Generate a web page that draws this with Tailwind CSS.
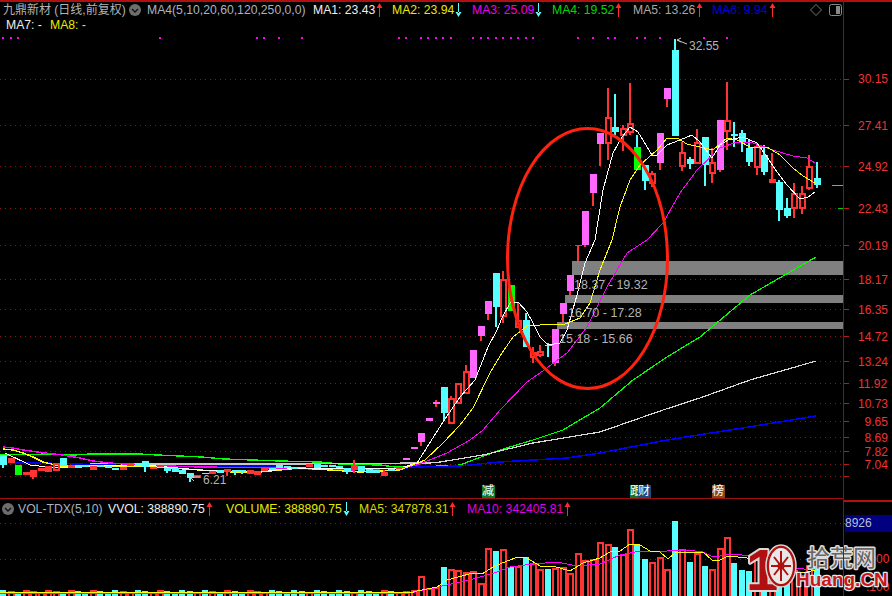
<!DOCTYPE html>
<html lang="zh">
<head>
<meta charset="utf-8">
<title>九鼎新材</title>
<script src="https://cdn.jsdelivr.net/npm/@tailwindcss/browser@4"></script>
</head>
<body class="bg-black overflow-hidden">
<div class="relative w-[892px] h-[596px] overflow-hidden bg-black text-[12.2px] leading-none font-['Liberation_Sans','Noto_Sans_CJK_SC',sans-serif]">

  <!-- the chart itself: candles and lines are filled in by the script below -->
  <svg id="chart" class="absolute inset-0" width="892" height="596" viewBox="0 0 892 596">
    <g id="grid"></g>
    <rect x="572" y="261" width="271" height="14" fill="#808080"/>
    <rect x="565" y="295" width="278" height="8" fill="#808080"/>
    <rect x="557" y="322" width="286" height="7" fill="#808080"/>
    <g id="lines" fill="none" shape-rendering="crispEdges"></g>
    <g id="candles" shape-rendering="crispEdges"></g>
    <g id="lines2" fill="none" shape-rendering="crispEdges"></g>
    <g id="vols" shape-rendering="crispEdges"></g>
    <g id="vlines" fill="none" shape-rendering="crispEdges"></g>

    <g fill="#b4b4b4" font-size="12.5">
      <text x="574" y="288.5">18.37 - 19.32</text>
      <text x="568" y="316.5">16.70 - 17.28</text>
      <text x="559" y="342.5">15.18 - 15.66</text>
    </g>
    <g fill="#b4b4b4" font-size="12">
      <text x="689" y="49.5">32.55</text>
      <text x="203" y="483.5">6.21</text>
    </g>
    <path d="M687 44 L677 40 M677 40 L681 38 M677 40 L681 42" stroke="#c8c8c8" fill="none"/>
    <path d="M200 477 L190 477 M190 477 L194 475 M190 477 L194 481" stroke="#c8c8c8" fill="none"/>

    <ellipse cx="587.5" cy="258.5" rx="80" ry="130" fill="none" stroke="#ff2210" stroke-width="3"/>

    <!-- right axis -->
    <g fill="#ee3333" font-size="12">
      <text x="858" y="83">30.15</text>
      <text x="858" y="129.5">27.41</text>
      <text x="858" y="170.5">24.92</text>
      <text x="858" y="212.5">22.43</text>
      <text x="858" y="249.5">20.19</text>
      <text x="858" y="283.5">18.17</text>
      <text x="858" y="313.5">16.35</text>
      <text x="858" y="340.5">14.72</text>
      <text x="858" y="365.5">13.24</text>
      <text x="858" y="387.5">11.92</text>
      <text x="858" y="407.5">10.73</text>
      <text x="864.5" y="425.5">9.65</text>
      <text x="864.5" y="441.5">8.69</text>
      <text x="864.5" y="455.5">7.82</text>
      <text x="864.5" y="468.5">7.04</text>
      <text x="866" y="563">.000</text>
      <text x="866" y="591">.100</text>
    </g>
    <rect x="832" y="185" width="11" height="1" fill="#a8a800"/>
    <rect x="838" y="208" width="5" height="1" fill="#00d000"/>

    <!-- watermark -->
    <g font-weight="700" paint-order="stroke" stroke-linejoin="round">
      <text x="746" y="590" font-size="58" fill="#b01010" stroke="#d8d8d8" stroke-width="4">1</text>
      <ellipse cx="781" cy="566" rx="12" ry="18" fill="#e8e8e8" stroke="#b01010" stroke-width="6"/>
      <ellipse cx="781" cy="566" rx="15" ry="21" fill="none" stroke="#d8d8d8" stroke-width="1.5"/>
      <path d="M781 551 V581 M771 566 H791 M774 557 L788 575 M788 557 L774 575" stroke="#b01010" stroke-width="2"/>
      <circle cx="781" cy="566" r="3.5" fill="#b01010"/>
      <text x="807" y="566" font-size="23" fill="#666666" stroke="#dddddd" stroke-width="3" font-weight="400">拾荒网</text>
      <text x="796" y="586" font-size="19" fill="#c81818" stroke="#e8e8e8" stroke-width="2.5">Huang.CN</text>
    </g>
  </svg>

  <!-- page frame: top rule, legend rows, marker row, volume legend -->
  <div class="relative flex flex-col h-full">
    <div class="h-[2px] bg-[#b01010]"></div>

    <div class="flex items-center h-[16px] pl-[3px] whitespace-nowrap">
      <span class="w-[126px] text-[12px] text-[#b4b4b4]">九鼎新材 (日线,前复权)</span>
      <span class="flex items-center justify-center w-[12px] h-[12px] mr-[6px] rounded-full bg-[#6e6e6e]">
        <svg width="8" height="5" viewBox="0 0 8 5"><path d="M1 1 L4 4 L7 1" fill="none" stroke="#111" stroke-width="1.4"/></svg>
      </span>
      <span class="w-[166px] text-[#a8b4c0]">MA4(5,10,20,60,120,250,0,0)</span>
      <span class="flex items-center w-[79px] text-[#eeeeee]">MA1: 23.43<svg class="ml-[1px]" width="7" height="14" viewBox="0 0 7 14"><path d="M3.5 0 L6.5 5 H0.5 Z M3 4 H4 V14 H3 Z" fill="#ff2a2a"/></svg></span>
      <span class="flex items-center w-[80px] text-[#e8e800]">MA2: 23.94<svg class="ml-[1px]" width="7" height="14" viewBox="0 0 7 14"><path d="M3.5 14 L6.5 9 H0.5 Z M3 0 H4 V10 H3 Z" fill="#55ffff"/></svg></span>
      <span class="flex items-center w-[80px] text-[#ee00ee]">MA3: 25.09<svg class="ml-[1px]" width="7" height="14" viewBox="0 0 7 14"><path d="M3.5 14 L6.5 9 H0.5 Z M3 0 H4 V10 H3 Z" fill="#55ffff"/></svg></span>
      <span class="flex items-center w-[81px] text-[#00d800]">MA4: 19.52<svg class="ml-[1px]" width="7" height="14" viewBox="0 0 7 14"><path d="M3.5 0 L6.5 5 H0.5 Z M3 4 H4 V14 H3 Z" fill="#ff2a2a"/></svg></span>
      <span class="flex items-center w-[79px] text-[#a8a8a8]">MA5: 13.26<svg class="ml-[1px]" width="7" height="14" viewBox="0 0 7 14"><path d="M3.5 0 L6.5 5 H0.5 Z M3 4 H4 V14 H3 Z" fill="#ff2a2a"/></svg></span>
      <span class="flex items-center w-[98px] text-[#0000e0]">MA6: 9.94<svg class="ml-[1px]" width="7" height="14" viewBox="0 0 7 14"><path d="M3.5 0 L6.5 5 H0.5 Z M3 4 H4 V14 H3 Z" fill="#ff2a2a"/></svg></span>
      <svg width="12" height="12" viewBox="0 0 12 12" class="mr-[7px]"><path d="M6 0.5 L11.5 6 L6 11.5 L0.5 6 Z" fill="none" stroke="#777"/></svg>
      <svg width="13" height="12" viewBox="0 0 13 12"><rect x="0.5" y="0.5" width="12" height="11" rx="2" fill="none" stroke="#888"/><rect x="7" y="2" width="4" height="8" fill="#888"/></svg>
    </div>

    <div class="flex items-center h-[15px] pl-[6px] whitespace-nowrap">
      <span class="w-[44px] text-[#eeeeee]">MA7: -</span>
      <span class="text-[#e8e800]">MA8: -</span>
    </div>

    <div class="flex-1"></div>

    <div class="h-[1px] mb-[1px] w-[843px] bg-[#a01010]"></div>
    <div class="flex items-center h-[18px] pl-[2px] whitespace-nowrap">
      <span class="flex items-center justify-center w-[12px] h-[12px] mr-[4px] rounded-full bg-[#6e6e6e]">
        <svg width="8" height="5" viewBox="0 0 8 5"><path d="M1 1 L4 4 L7 1" fill="none" stroke="#111" stroke-width="1.4"/></svg>
      </span>
      <span class="w-[90px] text-[#a8b4c0]">VOL-TDX(5,10)</span>
      <span class="flex items-center w-[118px] text-[#eeeeee]">VVOL: 388890.75<svg class="ml-[1px]" width="7" height="14" viewBox="0 0 7 14"><path d="M3.5 0 L6.5 5 H0.5 Z M3 4 H4 V14 H3 Z" fill="#ff2a2a"/></svg></span>
      <span class="flex items-center w-[133px] text-[#e8e800]">VOLUME: 388890.75<svg class="ml-[1px]" width="7" height="14" viewBox="0 0 7 14"><path d="M3.5 14 L6.5 9 H0.5 Z M3 0 H4 V10 H3 Z" fill="#55ffff"/></svg></span>
      <span class="flex items-center w-[108px] text-[#d8d800]">MA5: 347878.31<svg class="ml-[1px]" width="7" height="14" viewBox="0 0 7 14"><path d="M3.5 0 L6.5 5 H0.5 Z M3 4 H4 V14 H3 Z" fill="#ff2a2a"/></svg></span>
      <span class="flex items-center text-[#e000e0]">MA10: 342405.81<svg class="ml-[1px]" width="7" height="14" viewBox="0 0 7 14"><path d="M3.5 0 L6.5 5 H0.5 Z M3 4 H4 V14 H3 Z" fill="#ff2a2a"/></svg></span>
    </div>
    <div class="h-[78px]"></div>
  </div>

  <!-- event tags sit on top of the chart at their date -->
  <span class="absolute left-[482px] top-[485px] w-[13px] h-[13px] bg-[#0a7a2a] text-white text-[12px] leading-[13px]">减</span>
  <span class="absolute left-[630px] top-[485px] w-[8px] h-[13px] bg-[#0a7a2a] text-white text-[12px] leading-[13px] overflow-hidden">跟</span>
  <span class="absolute left-[638px] top-[485px] w-[13px] h-[13px] bg-[#1a4a80] text-white text-[12px] leading-[13px]">财</span>
  <span class="absolute left-[712px] top-[485px] w-[13px] h-[13px] bg-[#8b4513] text-white text-[12px] leading-[13px]">榜</span>

  <!-- right axis -->
  <div class="absolute left-[843px] top-0 w-[1px] h-full bg-[#8a1010]"></div>
  <div class="absolute left-[844px] top-[500px] w-[48px] h-[2px] bg-[#b01010]"></div>
  <div class="absolute left-[845px] top-[515px] w-[47px] h-[17px] bg-[#000080] text-[#b8c0d0] text-[12px] leading-[17px]">8926</div>
</div>

<script>
  const NS = 'http://www.w3.org/2000/svg';
  function add(parent, tag, attrs) {
    const el = document.createElementNS(NS, tag);
    for (const k in attrs) el.setAttribute(k, attrs[k]);
    document.getElementById(parent).appendChild(el);
  }

  // dotted price / volume levels
  const levels = [79,125,166,208,245,279,309,336,361,383,403,421,437,451,464,476];
  levels.forEach(function (y) {
    add('grid', 'line', {x1: 0, x2: 843, y1: y + .5, y2: y + .5, stroke: '#8a1515', 'stroke-dasharray': '1 4'});
    add('grid', 'line', {x1: 843, x2: 849, y1: y + .5, y2: y + .5, stroke: '#b02020'});
  });
  [523, 559].forEach(function (y) {
    add('grid', 'line', {x1: 0, x2: 843, y1: y + .5, y2: y + .5, stroke: '#8a1515', 'stroke-dasharray': '1 4'});
    add('grid', 'line', {x1: 843, x2: 849, y1: y + .5, y2: y + .5, stroke: '#b02020'});
  });

  // type, body top, body bottom, wick top, wick bottom, volume top; index 0 is the latest day
  const days = [
    ['c',178,185,162,188,566], ['h',166,188,155,190,565], ['h',193,208,186,214,575], ['h',193,208,183,218,570],
    ['c',208,216,198,218,575], ['c',182,210,180,221,572], ['r',179,183,153,183,572], ['c',155,172,145,175,575],
    ['h',146,167,143,175,558], ['c',148,162,140,166,571], ['c',133,142,130,152,570], ['c',134,136,122,147,563],
    ['h',120,131,82,150,537], ['p',120,170,120,172,548], ['h',162,173,148,183,569], ['c',137,165,137,186,566],
    ['h',142,163,129,164,553], ['c',159,164,157,169,562], ['h',152,166,142,171,549], ['c',50,136,39,136,521],
    ['p',88,99,88,107,569], ['p',133,163,133,170,557], ['h',173,183,171,187,562], ['c',165,181,165,190,559],
    ['g',147,170,135,170,544], ['h',123,132,83,135,529], ['h',128,135,125,151,554], ['c',127,132,94,135,547],
    ['h',117,143,88,160,544], ['p',133,144,133,166,542], ['p',174,193,174,206,559], ['p',211,245,211,247,560],
    ['r',245,246,245,261,553], ['p',275,291,275,295,573], ['p',303,314,303,322,567], ['p',329,363,329,366,568],
    ['c',345,346,343,357,569], ['h',351,355,345,357,569], ['h',352,357,347,363,563], ['c',320,347,313,347,557],
    ['h',320,327,302,327,566], ['g',285,311,285,311,567], ['h',279,316,271,323,549], ['c',273,307,273,327,551],
    ['p',301,314,301,320,548], ['p',326,336,326,341,583], ['p',350,378,350,378,571], ['h',371,393,365,393,572],
    ['h',383,403,383,403,570], ['h',398,423,396,423,569], ['c',387,413,387,420,567], ['p',402,404,400,407,587],
    ['p',418,421,418,421,588], ['p',433,442,433,446,576], ['p',447,449,447,449,590], ['p',458,460,458,460,591]
  ];
  // flat stretch before the run-up, oldest first
  const flat = [
    ['c',455,465,455,468], ['r',458,463,458,463], ['g',465,475,465,475], ['r',472,475,472,475], ['r',470,477,470,479],
    ['r',468,471,468,471], ['r',466,472,466,472], ['h',463,470,463,470], ['c',458,466,458,466], ['r',465,468,465,468],
    ['c',465,468,465,468], ['c',465,467,465,467], ['r',466,470,466,470], ['c',465,467,465,467], ['c',466,468,466,468],
    ['c',468,470,468,470], ['r',467,470,467,470], ['r',463,466,463,466], ['c',463,466,463,466], ['c',461,467,461,472],
    ['r',467,469,467,469], ['r',465,467,465,467], ['c',468,471,468,473], ['c',468,472,468,472], ['c',470,474,470,474],
    ['c',473,478,473,482], ['r',475,478,475,478], ['c',473,474,473,474], ['r',471,474,471,474], ['c',470,473,470,473],
    ['r',469,472,469,476], ['c',470,472,470,475], ['c',470,472,470,474], ['r',470,474,470,474], ['r',471,475,471,475],
    ['r',468,471,468,471], ['c',468,470,468,470], ['c',465,468,465,468], ['c',466,468,466,468], ['c',467,469,467,469],
    ['c',467,468,467,468], ['r',464,467,464,467], ['c',464,468,464,468], ['c',465,467,465,467], ['c',465,467,465,467],
    ['c',466,468,466,468], ['c',468,472,468,474], ['r',465,470,460,473], ['c',466,471,466,471], ['c',469,473,469,473],
    ['c',470,473,470,473], ['r',472,476,470,476], ['c',469,471,469,471], ['r',467,469,467,469]
  ];
  flat.forEach(function (d, k) {
    const volTop = 590 + (k * 7 % 3);
    days[109 - k] = d.concat(volTop);
  });

  const fills = {c: '#55ffff', p: '#ff66ff', g: '#00ff00', r: '#ff3333', h: '#ff3333'};
  const RED = '#ff3333';

  days.forEach(function (d, n) {
    if (!d) return;
    const x = Math.round(816.5 - 7.46 * n);
    const type = d[0], top = d[1], bot = d[2], wt = d[3], wb = d[4], vol = d[5];
    const wick = (type === 'c') ? fills.c : (type === 'g' ? fills.c : RED);

    add('candles', 'rect', {x: x - 1, y: wt, width: 2, height: Math.max(top - wt, 0), fill: wick});
    add('candles', 'rect', {x: x - 1, y: bot, width: 2, height: Math.max(wb - bot, 0), fill: wick});
    if (type === 'h') {
      add('candles', 'rect', {x: x - 2.5, y: top + 1, width: 5, height: bot - top - 1, fill: 'none', stroke: RED, 'stroke-width': 2});
    } else {
      add('candles', 'rect', {x: x - 3, y: top, width: 7, height: Math.max(bot - top, 1), fill: fills[type]});
    }

    // volume column: rising days are hollow red, falling days solid cyan
    if (type === 'c' || type === 'g') {
      add('vols', 'rect', {x: x - 3, y: vol, width: 6, height: 596 - vol, fill: fills.c});
    } else {
      add('vols', 'rect', {x: x - 2, y: vol + 1, width: 5, height: 596 - vol, fill: 'none', stroke: RED, 'stroke-width': 2});
    }
  });

  function poly(parent, pts, color, width) {
    add(parent, 'polyline', {points: pts, stroke: color, 'stroke-width': width});
  }

  // moving averages, flat stretch first (thin and mostly behind the candles), then the climb
  poly('lines', '0,455 52,454 74,455 90,454 140,454 157,455 180,456 202,457 224,459 280,461 320,462 340,464 380,465 395,467 417,467', '#00ff00', 1.4);
  poly('lines', '90,463.5 140,464 280,464 430,463', '#c8c8c8', 1.4);
  poly('lines', '3,463 45,463 140,466 280,466 300,469 400,469 413,467', '#0000ff', 1.4);
  poly('lines', '3,447 13,448 23,450 37,452 45,453 63,455 80,458 93,461 110,463 140,465 200,467 280,468 350,470 400,468 417,465', '#ff00ff', 1.4);
  poly('lines', '3,449 13,450 23,453 33,457 43,462 60,466 100,466 140,466 200,470 250,473 300,468 360,472 400,470', '#ffff00', 1.4);
  poly('lines', '5,453 30,465 56,468 100,466 145,465 200,470 250,472 300,468 400,468 417,463', '#ffffff', 1);

  poly('lines2', '417,465 447,453 470,440 483,430 500,410 527,382 547,368 567,353 587,327 607,287 627,253 647,240 663,223 680,193 697,170 720,148 737,142 753,143 773,150 793,156 807,158 815,163', '#ff00ff', 1);
  poly('lines2', '417,467 460,465 473,460 500,450 533,440 563,430 600,408 633,380 667,357 700,337 750,295 816,257', '#00ff00', 1.2);
  poly('lines2', '430,463 440,462 483,455 533,443 600,432 663,410 700,398 750,380 816,361', '#d8d8d8', 1.2);
  poly('lines2', '413,467 460,466 500,462 567,458 600,453 667,440 730,430 816,416', '#0000ff', 1.5);
  poly('lines2', '400,470 425,460 443,443 460,425 473,408 490,373 502,353 513,337 527,326 540,325 565,324 580,318 590,303 600,270 612,240 620,207 630,180 640,165 657,150 667,138 677,138 687,144 700,147 713,150 727,138 737,140 750,147 767,147 780,155 793,168 803,176 815,183', '#ffff00', 1);
  poly('lines2', '417,463 443,422 460,397 475,380 488,347 497,330 502,318 510,303 518,302 527,312 533,323 540,337 548,345 560,343 567,330 577,295 585,263 595,240 603,190 613,153 622,137 630,127 638,132 652,155 657,155 667,145 680,140 692,135 700,142 712,158 720,145 728,140 743,137 757,143 767,157 777,172 787,185 800,199 808,197 815,192', '#ffffff', 1);

  poly('vlines', '0,593 410,593 447,585 477,578 497,572 510,567 533,564 557,562 577,566 600,564 620,555 640,551 667,551 687,550 703,552 713,557 733,554 750,556 767,563 793,568 815,570', '#ff00ff', 1);
  poly('vlines', '0,592 410,593 417,591 437,587 447,580 473,573 482,574 493,567 507,561 518,557 527,558 540,566 553,566 570,571 583,563 600,558 610,552 620,551 630,544 640,545 650,551 660,552 668,559 675,553 683,552 703,552 712,560 720,560 728,556 747,558 757,560 770,570 790,573 807,572 815,570', '#ffff00', 1);

  // magenta signal dots under the legend
  [3,11,18,160,257,264,279,302,399,406,421,428,436,443,451,473,481,488,496,503,511,518,526,533,578,593,608,615,637,645,660,704,727].forEach(function (x) {
    add('grid', 'rect', {x: x - 1, y: 37, width: 2, height: 2, fill: '#ff00ff'});
  });
</script>
</body>
</html>
